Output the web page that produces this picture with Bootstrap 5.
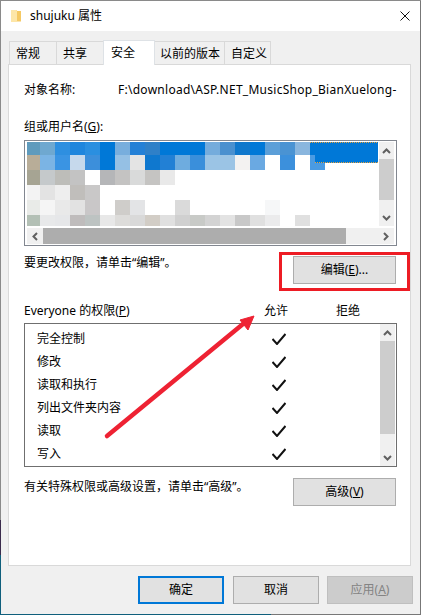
<!DOCTYPE html>
<html lang="zh-CN">
<head>
  <meta charset="UTF-8" />
  <link rel="stylesheet" href="https://cdn.jsdelivr.net/npm/bootstrap@5.3.3/dist/css/bootstrap.min.css">
  <script src="https://cdn.jsdelivr.net/npm/bootstrap@5.3.3/dist/js/bootstrap.bundle.min.js"></script>
  <title>shujuku 属性</title>
  <style>
    body {
      margin: 0;
      width: 421px;
      height: 615px;
      overflow: hidden;
      position: relative;
      font: 12px/16px "Noto Sans", "Noto Sans CJK SC", sans-serif;
      color: #000;
      background:
        linear-gradient(#777, #777) right bottom / 150px 1px no-repeat,
        linear-gradient(to bottom, #8a8a8a 0 520px, #3b2c4d 520px 555px, #0f5f7c 555px);
    }
    .dlg-win {
      margin: 1px 0 0 1px;
      width: 420px;
      height: 613px;
      border-right: 1px solid #777;
      background: #f0f0f0;
    }
    .dlg-title {
      height: 30px;
      background: #fff;
      padding-left: 10px;
    }
    .dlg-title svg { flex: none; }
    .dlg-title-text { margin-left: 9px; font-size: 12px; }
    .dlg-close { margin-left: auto; margin-right: 10px; }
    .dlg-tabs {
      margin: 9px 0 0 9px;
      height: 25px;
      border: 0;
      align-items: flex-end;
      flex-wrap: nowrap;
    }
    .dlg-tabs .nav-link {
      height: 23px;
      padding: 0 0 0 5px;
      margin: 0 0 1px -1px;
      font-size: 12px;
      line-height: 24px;
      white-space: nowrap;
      color: #000;
      background: #f0f0f0;
      border: 1px solid #d9d9d9;
      border-bottom: 0;
      border-radius: 0;
    }
    .dlg-tabs .tab-a { width: 48px; padding-left: 6px; }
    .dlg-tabs .tab-c { width: 71px; }
    .dlg-tabs .tab-d { width: 47px; padding-left: 6px; }
    .dlg-tabs .nav-link.active {
      height: 25px;
      width: 52px;
      margin-bottom: 0;
      padding-left: 7px;
      line-height: 24px;
      background: #fff;
      color: #000;
      position: relative;
      z-index: 1;
    }
    .dlg-panel {
      margin: -1px 0 0 7px;
      width: 403px;
      height: 502px;
      background: #fff;
      border: 1px solid #d9d9d9;
      padding: 17px 0 0 15px;
    }
    .obj-label { width: 94px; }
    .obj-path { width: 278px; white-space: nowrap; letter-spacing: .27px; }
    .group-label { margin-top: 21px; }
    .user-box {
      margin-top: 5px;
      width: 373px;
      height: 106px;
      border: 1px solid #828790;
      padding: 1px 2px 1px 2px;
    }
    .user-mosaic { display: block; width: 351px; height: 84px; flex: none; }
    .vbar {
      width: 15px;
      background: #f0f0f0;
      flex: none;
    }
    .vbar-arrow { height: 17px; }
    .vbar-thumb { background: #cdcdcd; }
    .user-box .vbar { margin-left: 1px; height: 84px; }
    .user-box .vbar-thumb { height: 41px; }
    .user-box .vbar-gap { height: 9px; }
    .hbar {
      margin-top: 2px;
      height: 16px;
      width: 367px;
      background: #f0f0f0;
    }
    .hbar-arrow { width: 16px; flex: none; }
    .hbar-thumb { width: 303px; height: 16px; background: #adadad; }
    .edit-row { margin-top: 10px; width: 372px; height: 28px; }
    .note-text { margin-top: -1px; }
    .win-btn {
      width: 103px;
      height: 28px;
      padding: 0;
      font-size: 12px;
      line-height: 26px;
      color: #000;
      background: #e1e1e1;
      border: 1px solid #adadad;
      border-radius: 0;
    }
    .btn-mark { position: relative; }
    .red-frame {
      position: absolute;
      top: -4px;
      left: -14px;
      right: -14px;
      bottom: -7px;
      border: 3px solid #ed1c24;
    }
    .perm-head { margin-top: 19px; }
    .perm-name-col { width: 240px; }
    .perm-allow-col { width: 72px; }
    .perm-box {
      margin-top: 4px;
      width: 373px;
      height: 144px;
      border: 1px solid #6f6f6f;
      padding-top: 3px;
    }
    .perm-rows { width: 355px; flex: none; }
    .perm-row { height: 23px; line-height: 23px; padding-left: 12px; }
    .perm-row-name { width: 235px; }
    .perm-check { width: 14px; height: 12px; }
    .perm-box .vbar { height: 142px; margin: -3px 0 0 0; }
    .perm-box .vbar-thumb { height: 93px; }
    .perm-box .vbar-gap { height: 15px; }
    .adv-row { margin-top: 11px; width: 372px; height: 28px; }
    .note-adv { margin-top: 1px; }
    .dlg-foot { margin: 10px 0 0 137px; }
    .dlg-foot .win-btn { width: 86px; }
    .win-btn.btn-default { border: 2px solid #0078d7; line-height: 24px; margin-right: 9px; }
    .win-btn.btn-cancel { margin-right: 8px; }
    .win-btn.btn-off {
      background: #ccc;
      border-color: #bfbfbf;
      color: #838383;
      opacity: 1;
    }
    .note-arrow {
      position: absolute;
      top: 0;
      left: 0;
      pointer-events: none;
    }
  </style>
</head>
<body>
  <div class="dlg-win">
    <div class="dlg-title d-flex align-items-center">
      <svg width="10" height="14" viewBox="0 0 10 14">
        <path d="M0 1h6v12H0z" fill="#fcdf94" />
        <path d="M6 2h4v10.5H6z" fill="#f5c964" />
        <path d="M0 1h5l1 1v11H0z" fill="#fde6a8" />
      </svg>
      <span class="dlg-title-text">shujuku 属性</span>
      <svg class="dlg-close" width="10" height="10" viewBox="0 0 10 10">
        <path d="M.5.5l9 9M9.5.5l-9 9" stroke="#111" stroke-width="1" fill="none" />
      </svg>
    </div>

    <ul class="nav nav-tabs dlg-tabs">
      <li class="nav-item"><a class="nav-link tab-a" href="#">常规</a></li>
      <li class="nav-item"><a class="nav-link tab-a" href="#">共享</a></li>
      <li class="nav-item"><a class="nav-link active" href="#">安全</a></li>
      <li class="nav-item"><a class="nav-link tab-c" href="#">以前的版本</a></li>
      <li class="nav-item"><a class="nav-link tab-d" href="#">自定义</a></li>
    </ul>

    <div class="dlg-panel">
      <div class="d-flex">
        <div class="obj-label">对象名称:</div>
        <div class="obj-path">F:\download\ASP.NET_MusicShop_BianXuelong-</div>
      </div>

      <div class="group-label">组或用户名(<u>G</u>):</div>
      <div class="user-box">
        <div class="d-flex">
          <svg class="user-mosaic" id="mosaic" viewBox="0 0 351 84"></svg>
          <div class="vbar">
            <div class="vbar-arrow d-flex align-items-center justify-content-center">
              <svg width="9" height="6" viewBox="0 0 9 6"><path d="M1 5l3.5-3.5L8 5" stroke="#606060" stroke-width="2" fill="none" /></svg>
            </div>
            <div class="vbar-thumb"></div>
            <div class="vbar-gap"></div>
            <div class="vbar-arrow d-flex align-items-center justify-content-center">
              <svg width="9" height="6" viewBox="0 0 9 6"><path d="M1 1l3.5 3.5L8 1" stroke="#606060" stroke-width="2" fill="none" /></svg>
            </div>
          </div>
        </div>
        <div class="hbar d-flex align-items-center">
          <div class="hbar-arrow d-flex justify-content-center">
            <svg width="6" height="9" viewBox="0 0 6 9"><path d="M5 1L1.5 4.5 5 8" stroke="#606060" stroke-width="2" fill="none" /></svg>
          </div>
          <div class="hbar-thumb"></div>
          <div class="flex-grow-1"></div>
          <div class="hbar-arrow d-flex justify-content-center">
            <svg width="6" height="9" viewBox="0 0 6 9"><path d="M1 1l3.5 3.5L1 8" stroke="#606060" stroke-width="2" fill="none" /></svg>
          </div>
        </div>
      </div>

      <div class="edit-row d-flex justify-content-between">
        <div class="note-text">要更改权限，请单击“编辑”。</div>
        <div class="btn-mark">
          <button type="button" class="btn win-btn">编辑(<u>E</u>)...</button>
          <span class="red-frame"></span>
        </div>
      </div>

      <div class="perm-head d-flex">
        <div class="perm-name-col">Everyone 的权限(<u>P</u>)</div>
        <div class="perm-allow-col">允许</div>
        <div>拒绝</div>
      </div>
      <div class="perm-box d-flex">
        <div class="perm-rows" id="permRows"></div>
        <div class="vbar">
          <div class="vbar-arrow d-flex align-items-center justify-content-center">
            <svg width="9" height="6" viewBox="0 0 9 6"><path d="M1 5l3.5-3.5L8 5" stroke="#606060" stroke-width="2" fill="none" /></svg>
          </div>
          <div class="vbar-thumb"></div>
          <div class="vbar-gap"></div>
          <div class="vbar-arrow d-flex align-items-center justify-content-center">
            <svg width="9" height="6" viewBox="0 0 9 6"><path d="M1 1l3.5 3.5L8 1" stroke="#606060" stroke-width="2" fill="none" /></svg>
          </div>
        </div>
      </div>

      <div class="adv-row d-flex justify-content-between">
        <div class="note-adv">有关特殊权限或高级设置，请单击“高级”。</div>
        <button type="button" class="btn win-btn">高级(<u>V</u>)</button>
      </div>
    </div>

    <div class="dlg-foot d-flex">
      <button type="button" class="btn win-btn btn-default">确定</button>
      <button type="button" class="btn win-btn btn-cancel">取消</button>
      <button type="button" class="btn win-btn btn-off" disabled>应用(<u>A</u>)</button>
    </div>
  </div>

  <!-- red annotation arrow drawn on top of the dialog -->
  <svg class="note-arrow" width="421" height="615" viewBox="0 0 421 615">
    <path d="M107 436L243 324" stroke="#ee2233" stroke-width="4.5" stroke-linecap="round" fill="none" />
    <path d="M254 316L240 320 248 330z" fill="#ee2233" stroke="#ee2233" stroke-width="1" />
  </svg>

  <script>
    // blurred user names in the list, one colour per 15px block
    const rows = [
      ['5f9bbd','6fa8d0','2e8fe0','1f86dd','2a8fe0','0078d7','78aedd','2480d6','2f80c8','0078d7','0078d7','0078d7','75acdc','4a90cf','1078cc','0078d7','5c9fd8','4a93d3','8ab6de'],
      ['b8ad98','7bb4e4','3a94e3','c6d9ec','3c8fdb','0078d7','95c0e4','e4e4e4','0f78cf','2280d5','6eacdf','3a8fdb','9bc4e5','9bc4e5','f3f2f1','6aa9e2','fff','3c90dc','fff','4a9be3'],
      ['a6a493','c5c9cb','bdbdb9','c3c3c3','fff','b5b6b8','c4c3c2','d9dada','c5c4c2','e9e9e9'],
      ['f3f3f3','e3e3e3','eeeeee','c0bebb','c9c8c8'],
      ['e9ebe8','f5f5f5','e9e9e9','e2e2e2','c9c7c8','fff','cfcdca','e3e4e6','fff','fff','dadada','fff','fff','fff','fff','fff','f6f7f8'],
      ['b3c0b5','e8e9ea','e6e7e9','bfbcbc','bdc3c2','e8e8e8','dddcda','d9d9d9','d2cdc6','e0e0e0','d0d0d0','c8cac7','d3d3d3','e3e3e3','c8c8c8','e0e0e0','ebebec','fff','e0e0e0']
    ];
    let svg = '';
    rows.forEach((row, j) => {
      row.forEach((c, i) => {
        svg += `<rect x="${15 * i - 2}" y="${15 * j - 2}" width="15" height="15" fill="#${c}" />`;
      });
    });
    svg += '<rect x="283" y="0" width="68" height="13" fill="#0078d7" />';
    svg += '<rect x="288" y="13" width="63" height="8" fill="#0078d7" />';
    svg += '<path d="M283 .5H351M288 20.5H351" stroke="#e8a33d" stroke-dasharray="1 1" fill="none" />';
    document.getElementById('mosaic').innerHTML = svg;

    const perms = ['完全控制', '修改', '读取和执行', '列出文件夹内容', '读取', '写入'];
    document.getElementById('permRows').innerHTML = perms.map(name => `
      <div class="perm-row d-flex align-items-center">
        <div class="perm-row-name">${name}</div>
        <svg class="perm-check" viewBox="0 0 14 12"><path d="M.5 6l4.5 5L13.5 1" stroke="#111" stroke-width="2" fill="none" /></svg>
      </div>`).join('');
  </script>
</body>
</html>
